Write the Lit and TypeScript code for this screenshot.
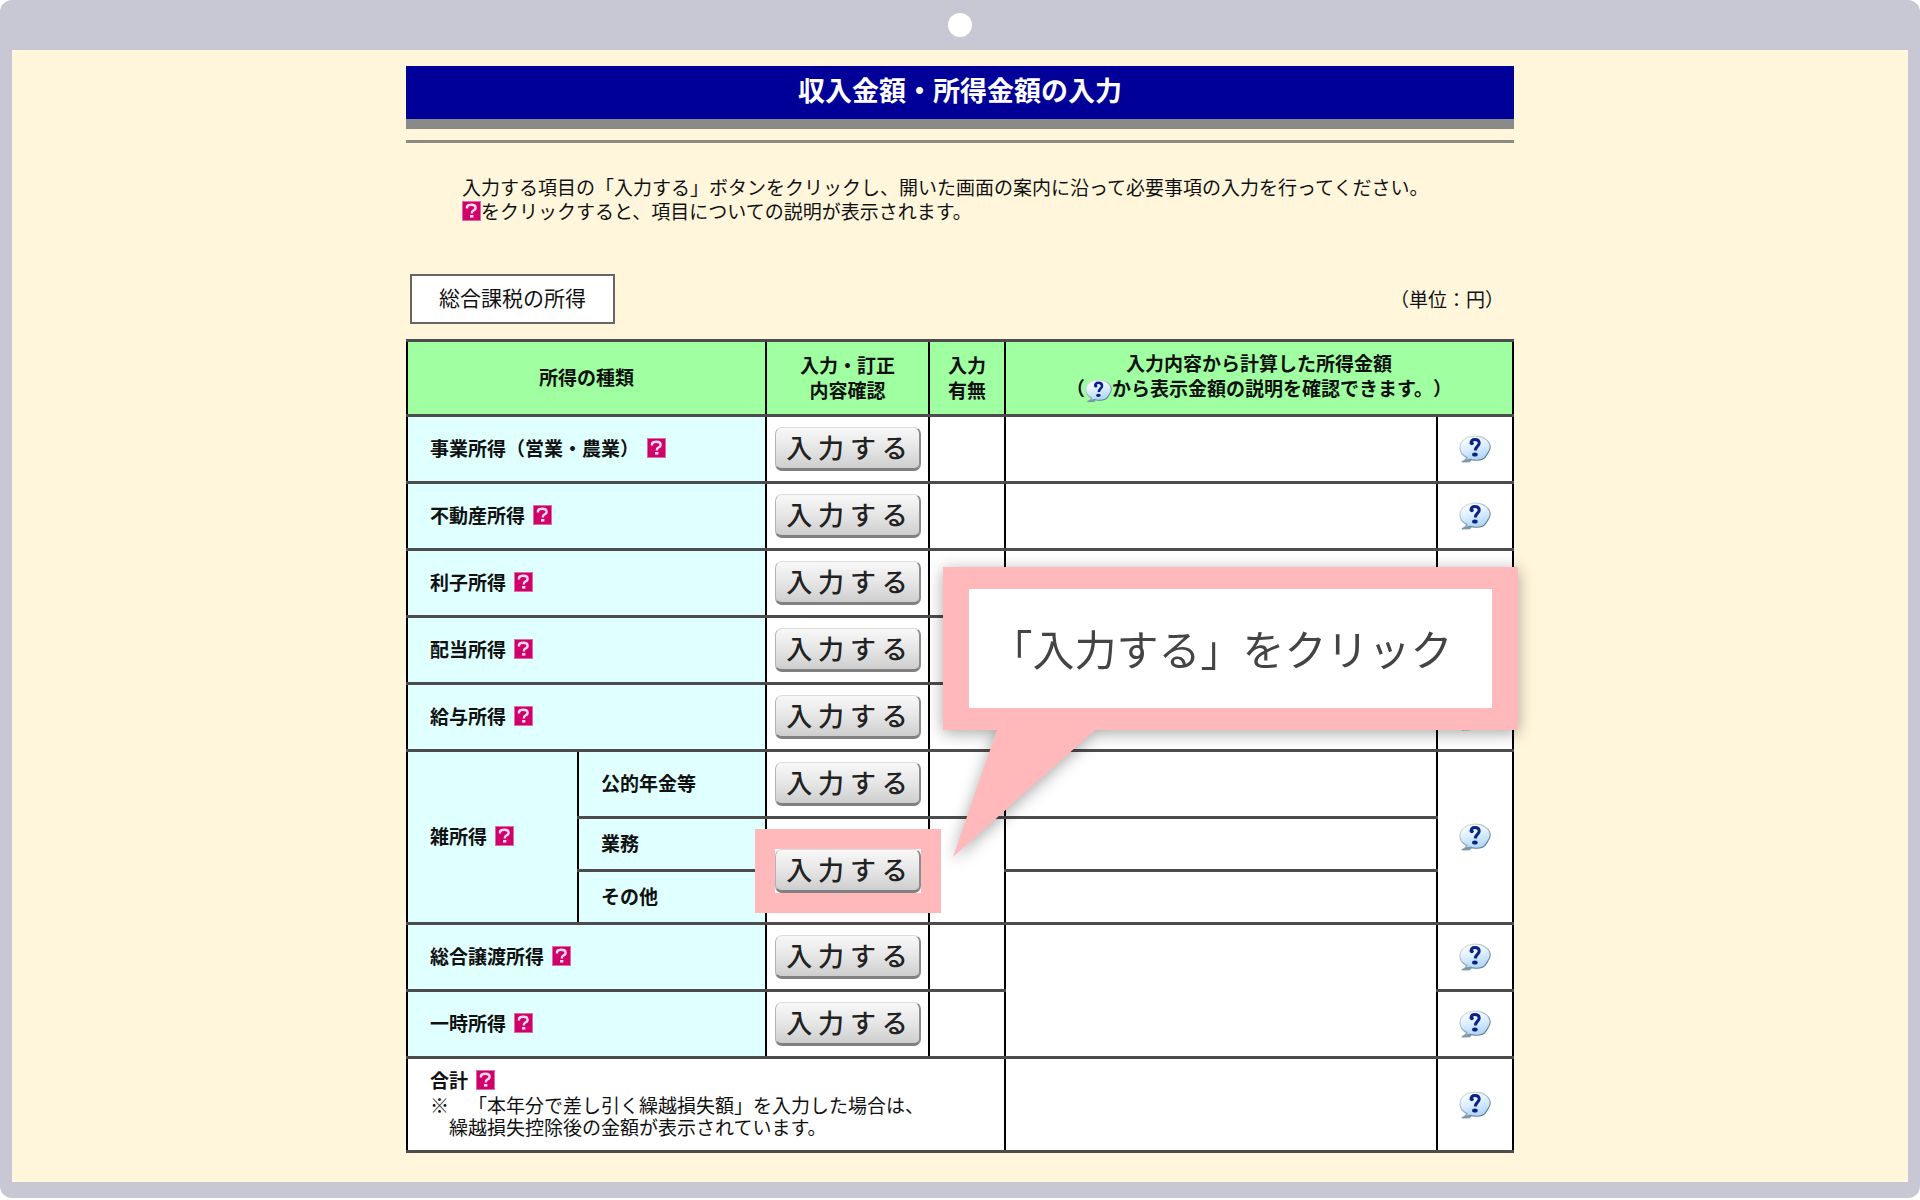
import { LitElement, html, css, svg, nothing } from "lit";
import { customElement, property } from "lit/decorators.js";

/** Small magenta square that links to the explanation of an item. */
@customElement("item-help")
class ItemHelp extends LitElement {
  @property() label = "説明";

  static styles = css`
    :host {
      display: inline-block;
      vertical-align: -2px;
      line-height: 0;
    }
    .link {
      display: block;
    }
    .icon {
      display: block;
      width: 19px;
      height: 20px;
    }
  `;

  render() {
    return html`<a class="link" href="#help" aria-label=${this.label}>
      <svg class="icon" viewBox="0 0 19 20" aria-hidden="true">
        <rect width="19" height="20" fill="#e06aa6" />
        <rect x="1" y="1" width="17" height="18" fill="#d0006a" />
        <path d="M5 7.6V5.6Q6 3.8 9.4 3.8Q13.6 3.8 13.6 6.8Q13.6 8.8 11.2 9.6Q9.8 10.2 9.8 12.4"
          fill="none" stroke="#fbdcec" stroke-width="2.4" />
        <rect x="8" y="14" width="3.4" height="2.6" fill="#fbdcec" />
      </svg>
    </a>`;
  }
}

/** Glossy speech balloon that links to the explanation of an amount. */
@customElement("amount-help")
class AmountHelp extends LitElement {
  @property() label = "表示金額の説明";

  static styles = css`
    :host {
      display: inline-block;
      width: 32px;
      vertical-align: middle;
      line-height: 0;
    }
    .link {
      display: block;
    }
    .icon {
      display: block;
      width: 100%;
      height: auto;
    }
  `;

  render() {
    return html`<a class="link" href="#amount-help" aria-label=${this.label}>
      <svg class="icon" viewBox="0 0 32 28" aria-hidden="true">
        <defs>
          <linearGradient id="gloss" x1="0.35" y1="0" x2="0.65" y2="1">
            <stop offset="0" stop-color="#ffffff" />
            <stop offset="0.45" stop-color="#dceeff" />
            <stop offset="1" stop-color="#a9d2f6" />
          </linearGradient>
          <linearGradient id="rim" x1="0.1" y1="0" x2="0.8" y2="1">
            <stop offset="0" stop-color="#e6ebf0" />
            <stop offset="0.5" stop-color="#9fb2c2" />
            <stop offset="1" stop-color="#4f7083" />
          </linearGradient>
        </defs>
        <path d="M2.6 26.2L3 27.6L11 27.2L13 24.8L8 23.5Z" fill="#8099a8" />
        <path d="M16 1.2C24 1 31 5.6 31.2 12C31.2 16 28.5 18.5 27 21C25 24.6 20.5 25.4 16 25.2C13.6 25 12.4 24.6 11 24.2L5.6 25.8L8 22.6C3.4 20.4 0.9 16.6 1 12.4C1.4 5.4 8 1.4 16 1.2Z"
          fill="url(#gloss)" stroke="url(#rim)" stroke-width="1.2" />
        <path d="M12 8.6C12 5.4 13.6 4.4 15.8 4.4C18.6 4.4 20.2 5.8 20.2 8.2C20.2 11 16.4 11.4 16.4 15.4"
          fill="none" stroke="#0b2386" stroke-width="3" />
        <circle cx="12.8" cy="8.3" r="1.9" fill="#0b2386" />
        <ellipse cx="15.9" cy="19.4" rx="2.8" ry="2" fill="#0b2386" />
      </svg>
    </a>`;
  }
}

@customElement("app-root")
class AppRoot extends LitElement {
  static styles = css`
    :host {
      display: block;
      padding-bottom: 2px;
      background: #fff;
      color: #111;
      font-family: "Noto Sans CJK JP", sans-serif;
      font-size: 19px;
      line-height: 24px;
      text-spacing-trim: space-all;
    }
    .device {
      box-sizing: border-box;
      display: flex;
      flex-direction: column;
      min-height: calc(100vh - 2px);
      padding: 0 12px 16px;
      border-radius: 12px;
      background: #c8c7d4;
    }
    .bezel {
      display: flex;
      align-items: center;
      justify-content: center;
      height: 50px;
    }
    .camera {
      width: 24px;
      height: 24px;
      border-radius: 50%;
      background: #fff;
    }
    .screen {
      flex: 1;
      padding: 16px 12px 29px;
      background: #fff6dc;
    }
    .sheet {
      max-width: 1108px;
      margin: 0 auto;
    }
    .banner {
      margin: 0;
      padding: 8px 0 13px;
      border-bottom: 10px solid #8a8a88;
      background: #000098;
      color: #fff;
      font-size: 27px;
      font-weight: 700;
      line-height: 32px;
      text-align: center;
    }
    .rule {
      height: 3px;
      margin: 11px 0 0;
      border: 0;
      background: #8c8a84;
    }
    .intro {
      margin: 32px 56px 51px;
    }
    .caption {
      display: flex;
      align-items: center;
      justify-content: space-between;
      padding: 0 10px 0 4px;
      margin-bottom: 15px;
    }
    .section {
      margin: 0;
      padding: 9px 27px 13px;
      border: 2px solid #666;
      background: #fff;
      font-size: 21px;
      font-weight: 400;
    }
    .grid {
      width: 100%;
      border-collapse: collapse;
      table-layout: fixed;
      background: #fff;
    }
    .c-kind { width: 171px; }
    .c-sub { width: 188px; }
    .c-action { width: 163px; }
    .c-state { width: 76px; }
    .c-help { width: 76px; }
    .grid th,
    .grid td {
      padding: 0;
      border: 2px solid #000;
      border-top: 3px solid #4c4c4c;
      border-bottom: 3px solid #4c4c4c;
    }
    .head { height: 75px; }
    .row { height: 67px; }
    .row.low { height: 53px; }
    .row.total { height: 94px; }
    .grid .top {
      padding-bottom: 3px;
      background: #a0ffa0;
      font-weight: 700;
      line-height: 25px;
      text-align: center;
    }
    .grid .kind {
      padding: 0 22px 2px;
      background: #e0ffff;
      font-weight: 700;
      text-align: left;
    }
    .name {
      display: flex;
      align-items: center;
      gap: 8px;
    }
    .center {
      text-align: center;
    }
    .inline {
      width: 27px;
    }
    .grid .sum {
      padding: 0 22px 4px;
      font-weight: 400;
      line-height: 22px;
      text-align: left;
    }
    .sum .name {
      font-weight: 700;
      line-height: 24px;
    }
    .note {
      margin: 2px 0 0;
      padding-left: 19px;
      text-indent: -19px;
    }
    .note-line {
      display: block;
      text-indent: 0;
    }
    .slot {
      position: relative;
      display: inline-block;
      vertical-align: middle;
    }
    .enter {
      display: block;
      box-sizing: border-box;
      width: 146px;
      height: 44px;
      padding: 0 0 2px;
      border: 1px solid #b4b4b4;
      border-top-color: #dcdcdc;
      border-right: 2px solid #8c8c8c;
      border-bottom: 3px solid #808080;
      border-radius: 7px;
      background: linear-gradient(#f8f8f8, #e6e6e6 50%, #cecece);
      color: #222;
      font-family: inherit;
      font-size: 26px;
      font-weight: 500;
      line-height: 36px;
      white-space: nowrap;
    }
    .marked::before {
      content: "";
      position: absolute;
      z-index: 1;
      inset: -20px;
      border: 20px solid #ffb9ba;
      pointer-events: none;
    }
    /* The balloon floats over the table, tied to the marked button. */
    .callout {
      position: absolute;
      z-index: 2;
      left: 168px;
      top: -282px;
      filter: drop-shadow(0 3px 8px rgba(0, 0, 0, 0.35));
    }
    .bubble {
      padding: 37px 39px 38px 22px;
      border: solid #ffb9ba;
      border-width: 22px 26px;
      background: #fff;
      color: #444;
      font-size: 42px;
      font-weight: 400;
      line-height: 44px;
      white-space: nowrap;
    }
    .tail {
      display: block;
      width: 142px;
      height: 127px;
      margin-left: 10px;
    }
  `;

  private help(name: string) {
    return html`<item-help label="${name}の説明"></item-help>`;
  }

  private kind(name: string) {
    return html`<span class="name">${name}${this.help(name)}</span>`;
  }

  private button(marked = false) {
    return html`<span class="slot ${marked ? "marked" : ""}">
      <button class="enter" type="button">入 力 す る</button>
      ${marked
        ? html`<div class="callout" role="note">
            <div class="bubble">「入力する」をクリック</div>
            <svg class="tail" viewBox="0 0 142 127" aria-hidden="true">
              ${svg`<path d="M44 0H142L0 127Z" fill="#ffb9ba" />`}
            </svg>
          </div>`
        : nothing}
    </span>`;
  }

  private row(name: string, amount: unknown = html`<td></td>`) {
    return html`<tr class="row">
      <th class="kind" scope="row" colspan="2">${this.kind(name)}</th>
      <td class="center">${this.button()}</td>
      <td></td>
      ${amount}
      <td class="center"><amount-help></amount-help></td>
    </tr>`;
  }

  render() {
    return html`
      <div class="device">
        <div class="bezel"><span class="camera"></span></div>
        <main class="screen">
          <div class="sheet">
            <h1 class="banner">収入金額・所得金額の入力</h1>
            <hr class="rule" />
            <p class="intro">
              入力する項目の「入力する」ボタンをクリックし、開いた画面の案内に沿って必要事項の入力を行ってください。<br />${this.help("項目")}をクリックすると、項目についての説明が表示されます。
            </p>
            <div class="caption">
              <h2 class="section">総合課税の所得</h2>
              <span>（単位：円）</span>
            </div>
            <table class="grid">
              <colgroup>
                <col class="c-kind" />
                <col class="c-sub" />
                <col class="c-action" />
                <col class="c-state" />
                <col />
                <col class="c-help" />
              </colgroup>
              <thead>
                <tr class="head">
                  <th class="top" scope="col" colspan="2">所得の種類</th>
                  <th class="top" scope="col">入力・訂正<br />内容確認</th>
                  <th class="top" scope="col">入力<br />有無</th>
                  <th class="top" scope="col" colspan="2">
                    入力内容から計算した所得金額<br />（<amount-help class="inline"></amount-help>から表示金額の説明を確認できます。）
                  </th>
                </tr>
              </thead>
              <tbody>
                ${["事業所得（営業・農業）", "不動産所得", "利子所得", "配当所得", "給与所得"].map((name) => this.row(name))}
                <tr class="row">
                  <th class="kind" scope="rowgroup" rowspan="3">${this.kind("雑所得")}</th>
                  <th class="kind" scope="row">公的年金等</th>
                  <td class="center">${this.button()}</td>
                  <td></td>
                  <td></td>
                  <td class="center" rowspan="3"><amount-help></amount-help></td>
                </tr>
                <tr class="row low">
                  <th class="kind" scope="row">業務</th>
                  <td class="center" rowspan="2">${this.button(true)}</td>
                  <td rowspan="2"></td>
                  <td></td>
                </tr>
                <tr class="row low">
                  <th class="kind" scope="row">その他</th>
                  <td></td>
                </tr>
                ${this.row("総合譲渡所得", html`<td rowspan="2"></td>`)}
                ${this.row("一時所得", nothing)}
                <tr class="row total">
                  <th class="sum" scope="row" colspan="4">
                    ${this.kind("合計")}
                    <p class="note">※　「本年分で差し引く繰越損失額」を入力した場合は、<span class="note-line">繰越損失控除後の金額が表示されています。</span></p>
                  </th>
                  <td></td>
                  <td class="center"><amount-help></amount-help></td>
                </tr>
              </tbody>
            </table>
          </div>
        </main>
      </div>
    `;
  }
}
